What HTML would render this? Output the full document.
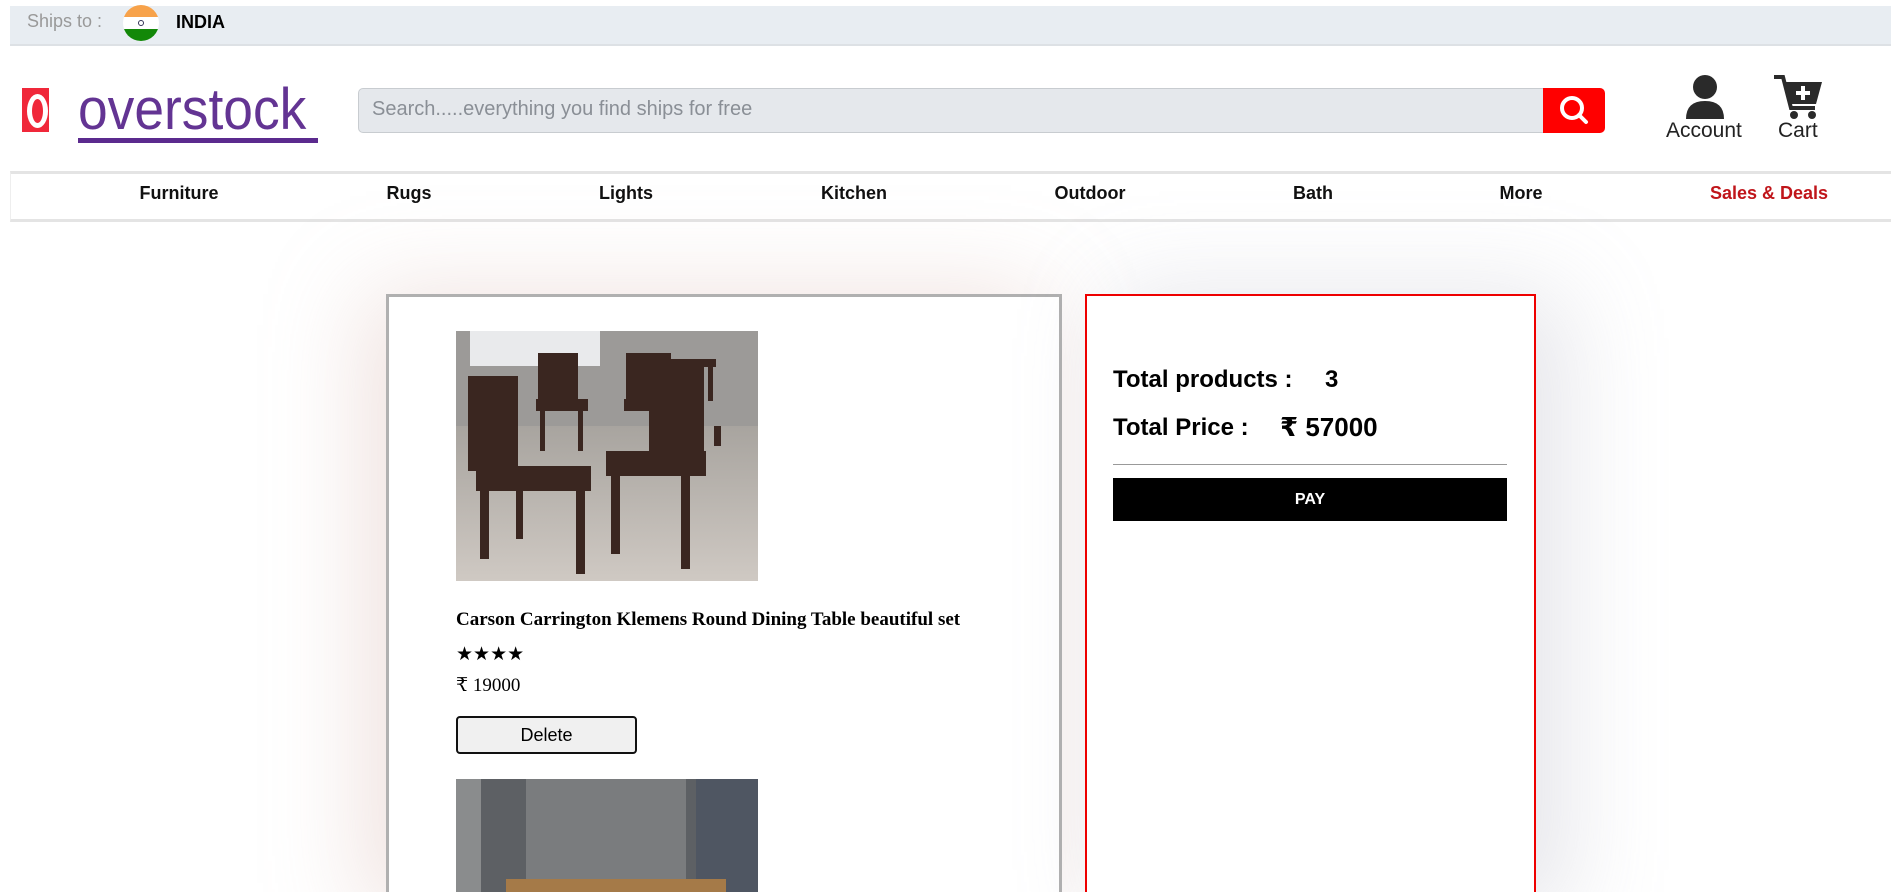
<!DOCTYPE html>
<html><head><meta charset="utf-8"><style>
*{box-sizing:border-box;margin:0;padding:0}
html,body{width:1891px;height:892px;overflow:hidden}
body{background:#fff;font-family:"Liberation Sans",Arial,sans-serif;position:relative}
.abs{position:absolute}
.top{left:10px;top:6px;width:1881px;height:40px;background:#e8edf2;border-bottom:2px solid #dde1e5}
.hdr{left:10px;top:48px;width:1881px;height:122px;background:#fff}
.nav{left:10px;top:171px;width:1881px;height:51px;border-top:3px solid #e4e4e4;border-bottom:3px solid #e4e4e4;border-left:1px solid #eee;background:#fff}
.nav span{position:absolute;top:9px;font-weight:bold;font-size:18px;color:#111;transform:translateX(-50%)}
.card{border:3px solid #b0b0b0;background:#fff;box-shadow:-20px 0 90px rgba(210,170,160,.35)}
</style></head><body>
<div class="abs top"></div>
<div class="abs" style="left:27px;top:11px;font-size:18px;color:#999">Ships to :</div>
<div class="abs" style="left:123px;top:5px;width:36px;height:36px;border-radius:50%;overflow:hidden">
 <div style="height:12px;background:#f7a24a"></div><div style="height:12px;background:#fff;position:relative"><div style="position:absolute;left:15px;top:3px;width:6px;height:6px;border:1px solid #335;border-radius:50%"></div></div><div style="height:12px;background:#138808"></div></div>
<div class="abs" style="left:176px;top:12px;font-size:18px;font-weight:bold">INDIA</div>
<div class="abs hdr"></div>
<div class="abs" style="left:22px;top:88px;width:27px;height:44px;background:#f0283a"></div>
<div class="abs" style="left:27px;top:94px;width:21px;height:34px;border:5px solid #fff;border-radius:50%"></div>
<div class="abs" style="left:78px;top:80px;font-size:58px;color:#5b2a8e;line-height:60px;transform:scaleX(0.92);transform-origin:left;opacity:.95">overstock</div>
<div class="abs" style="left:78px;top:138px;width:240px;height:5px;background:#5b2a8e"></div>
<div class="abs" style="left:358px;top:88px;width:1186px;height:45px;background:#e5e8ec;border:1px solid #c8ccd0;border-radius:5px 0 0 5px"></div>
<div class="abs" style="left:372px;top:98px;font-size:20px;color:#8a8f96">Search.....everything you find ships for free</div>
<div class="abs" style="left:1543px;top:88px;width:62px;height:45px;background:#f00;border-radius:0 5px 5px 0">
<svg width="62" height="45"><circle cx="29" cy="20" r="10" fill="none" stroke="#fff" stroke-width="4"/><line x1="36" y1="27" x2="43" y2="34" stroke="#fff" stroke-width="4" stroke-linecap="round"/></svg></div>
<svg class="abs" style="left:1683px;top:75px" width="44" height="45"><circle cx="22" cy="12" r="12" fill="#2a2a2a"/><path d="M3 44 Q3 26 22 26 Q41 26 41 44Z" fill="#2a2a2a"/></svg>
<div class="abs" style="left:1666px;top:119px;font-size:21px;color:#222">Account</div>
<svg class="abs" style="left:1773px;top:74px" width="52" height="46"><path d="M1 3 H10 L18 34 H42" fill="none" stroke="#2a2a2a" stroke-width="4"/><path d="M11 8 H49 L43 30 H17Z" fill="#2a2a2a"/><path d="M30 12 V26 M23 19 H37" stroke="#fff" stroke-width="4"/><circle cx="21" cy="41" r="4" fill="#2a2a2a"/><circle cx="39" cy="41" r="4" fill="#2a2a2a"/></svg>
<div class="abs" style="left:1778px;top:119px;font-size:21px;color:#222">Cart</div>
<div class="abs nav">
<span style="left:168px">Furniture</span><span style="left:398px">Rugs</span><span style="left:615px">Lights</span><span style="left:843px">Kitchen</span><span style="left:1079px">Outdoor</span><span style="left:1302px">Bath</span><span style="left:1510px">More</span><span style="left:1758px;color:#c0151a">Sales &amp; Deals</span></div>
<div class="abs card" style="left:386px;top:294px;width:676px;height:620px"></div>
<div class="abs" style="left:1085px;top:294px;width:451px;height:620px;border:2px solid #e00;background:#fff;box-shadow:30px 0 90px rgba(170,170,185,.3)"></div>
<svg class="abs" style="left:456px;top:331px" width="302" height="250">
<defs><linearGradient id="fl" x1="0" y1="0" x2="0" y2="1"><stop offset="0" stop-color="#a8a49f"/><stop offset="1" stop-color="#cfc9c3"/></linearGradient></defs>
<rect width="302" height="250" fill="#9c9a98"/><rect y="95" width="302" height="155" fill="url(#fl)"/>
<rect x="14" y="0" width="130" height="35" fill="#e9eaec"/>
<g fill="#3a2620"><rect x="82" y="22" width="40" height="50"/><rect x="80" y="68" width="52" height="12"/><rect x="84" y="78" width="5" height="42"/><rect x="122" y="78" width="5" height="42"/>
<rect x="170" y="22" width="45" height="50"/><rect x="200" y="28" width="60" height="8"/><rect x="168" y="68" width="50" height="12"/><rect x="252" y="35" width="5" height="35"/>
<rect x="12" y="45" width="50" height="95"/><rect x="20" y="135" width="115" height="25"/><rect x="24" y="158" width="9" height="70"/><rect x="120" y="158" width="9" height="85"/><rect x="60" y="158" width="7" height="50"/>
<rect x="193" y="30" width="55" height="95"/><rect x="150" y="120" width="100" height="25"/><rect x="155" y="143" width="9" height="80"/><rect x="225" y="143" width="9" height="95"/><rect x="258" y="95" width="7" height="20"/></g></svg>
<div class="abs" style="left:456px;top:609px;font-family:'Liberation Serif',serif;font-weight:bold;font-size:19px">Carson Carrington Klemens Round Dining Table beautiful set</div>
<div class="abs" style="left:456px;top:643px;font-size:19px">★★★★</div>
<div class="abs" style="left:456px;top:674px;font-family:'Liberation Serif','DejaVu Serif',serif;font-size:19px">₹ 19000</div>
<div class="abs" style="left:456px;top:716px;width:181px;height:38px;background:#f0f0f0;border:2px solid #111;border-radius:4px;text-align:center;line-height:34px;font-size:18px">Delete</div>
<svg class="abs" style="left:456px;top:779px" width="302" height="113"><rect width="302" height="113" fill="#5d6064"/><rect x="70" width="160" height="113" fill="#7a7c7e"/><rect x="240" width="62" height="113" fill="#4f5662"/><rect x="0" width="25" height="113" fill="#8a8c8d"/><rect x="50" y="100" width="220" height="13" fill="#a57a48"/></svg>
<div class="abs" style="left:1113px;top:366px;font-size:24px;font-weight:bold">Total products :</div>
<div class="abs" style="left:1325px;top:366px;font-size:24px;font-weight:bold">3</div>
<div class="abs" style="left:1113px;top:414px;font-size:24px;font-weight:bold">Total Price :</div>
<div class="abs" style="left:1280px;top:412px;font-size:26px;font-weight:bold;font-family:'Liberation Sans','DejaVu Sans',sans-serif">₹ 57000</div>
<div class="abs" style="left:1113px;top:464px;width:394px;height:1px;background:#999"></div>
<div class="abs" style="left:1113px;top:478px;width:394px;height:43px;background:#000;color:#fff;font-weight:bold;font-size:16px;text-align:center;line-height:43px">PAY</div>
</body></html>
